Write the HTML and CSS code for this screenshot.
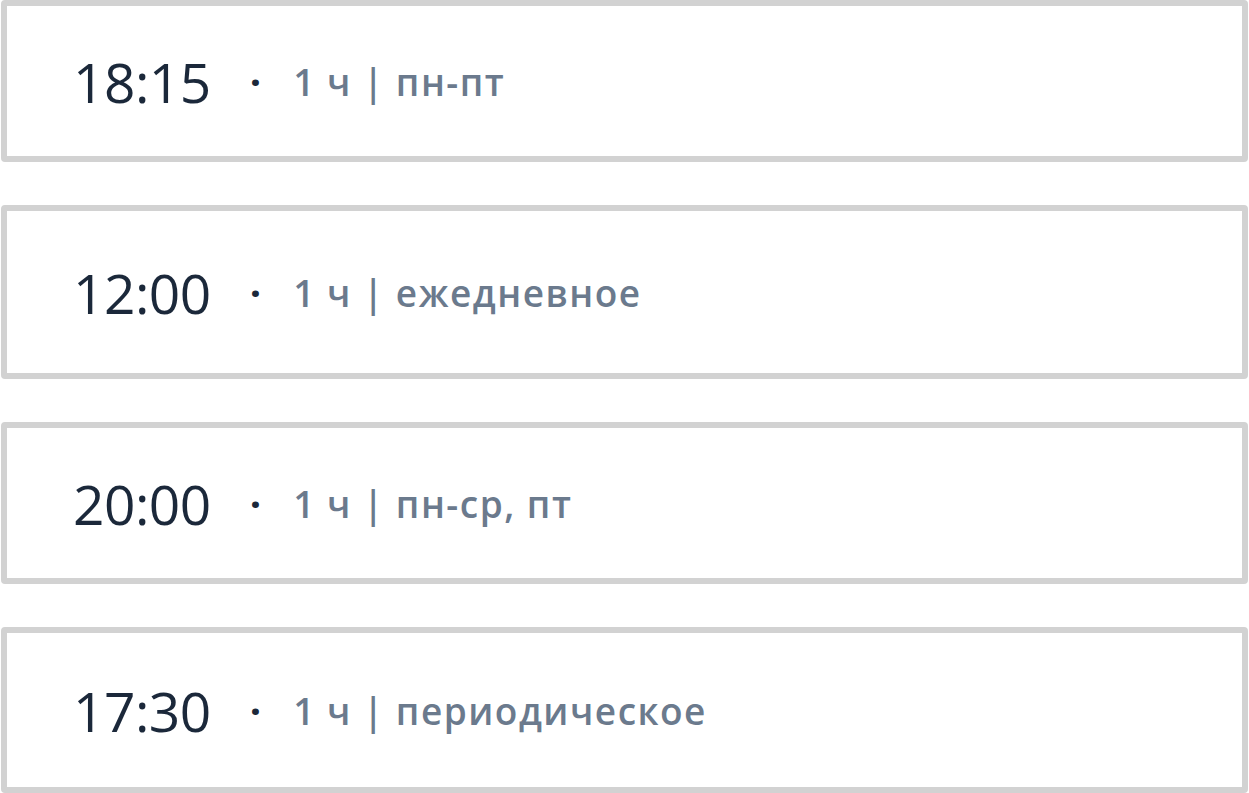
FILE: index.html
```html
<!DOCTYPE html>
<html lang="ru">
<head>
    <meta charset="UTF-8">
    <meta name="viewport" content="width=device-width, initial-scale=1.0">
    <title>Расписание</title>
    <link rel="stylesheet" href="styles.css">
</head>
<body>

    <div class="slots">
        <div class="slot">
            <span class="time">18:15</span>
            <span class="sep">·</span>
            <span class="meta">1 ч | пн-пт</span>
        </div>
        <div class="slot">
            <span class="time">12:00</span>
            <span class="sep">·</span>
            <span class="meta">1 ч | ежедневное</span>
        </div>
        <div class="slot">
            <span class="time">20:00</span>
            <span class="sep">·</span>
            <span class="meta">1 ч | пн-ср, пт</span>
        </div>
        <div class="slot">
            <span class="time">17:30</span>
            <span class="sep">·</span>
            <span class="meta">1 ч | периодическое</span>
        </div>
    </div>

</body>
</html>
```

FILE: styles.css
```css
body {
    margin: 0;
    font-family: "Open Sans", "Noto Sans", Arial, sans-serif;
    background: #fff;
}

.slots {
    display: flex;
    flex-direction: column;
    gap: 43px;
    margin: 0 1px;
}

.slot {
    display: flex;
    align-items: center;
    box-sizing: border-box;
    height: 164px;
    padding-left: 66px;
    border: 6px solid #d2d2d2;
    border-radius: 4px;
}

.slot:nth-child(1) { height: 162px; }
.slot:nth-child(2) { height: 174px; }
.slot:nth-child(3) { height: 162px; }
.slot:nth-child(4) { height: 166px; }

.time {
    font-size: 55px;
    letter-spacing: -0.5px;
    color: #1b283a;
}

.sep {
    font-size: 40px;
    font-weight: 700;
    color: #1b283a;
    margin: 0 32px 0 39px;
}

.meta {
    font-size: 37px;
    font-weight: 600;
    letter-spacing: 1.5px;
    color: #6b7a8d;
}
```
